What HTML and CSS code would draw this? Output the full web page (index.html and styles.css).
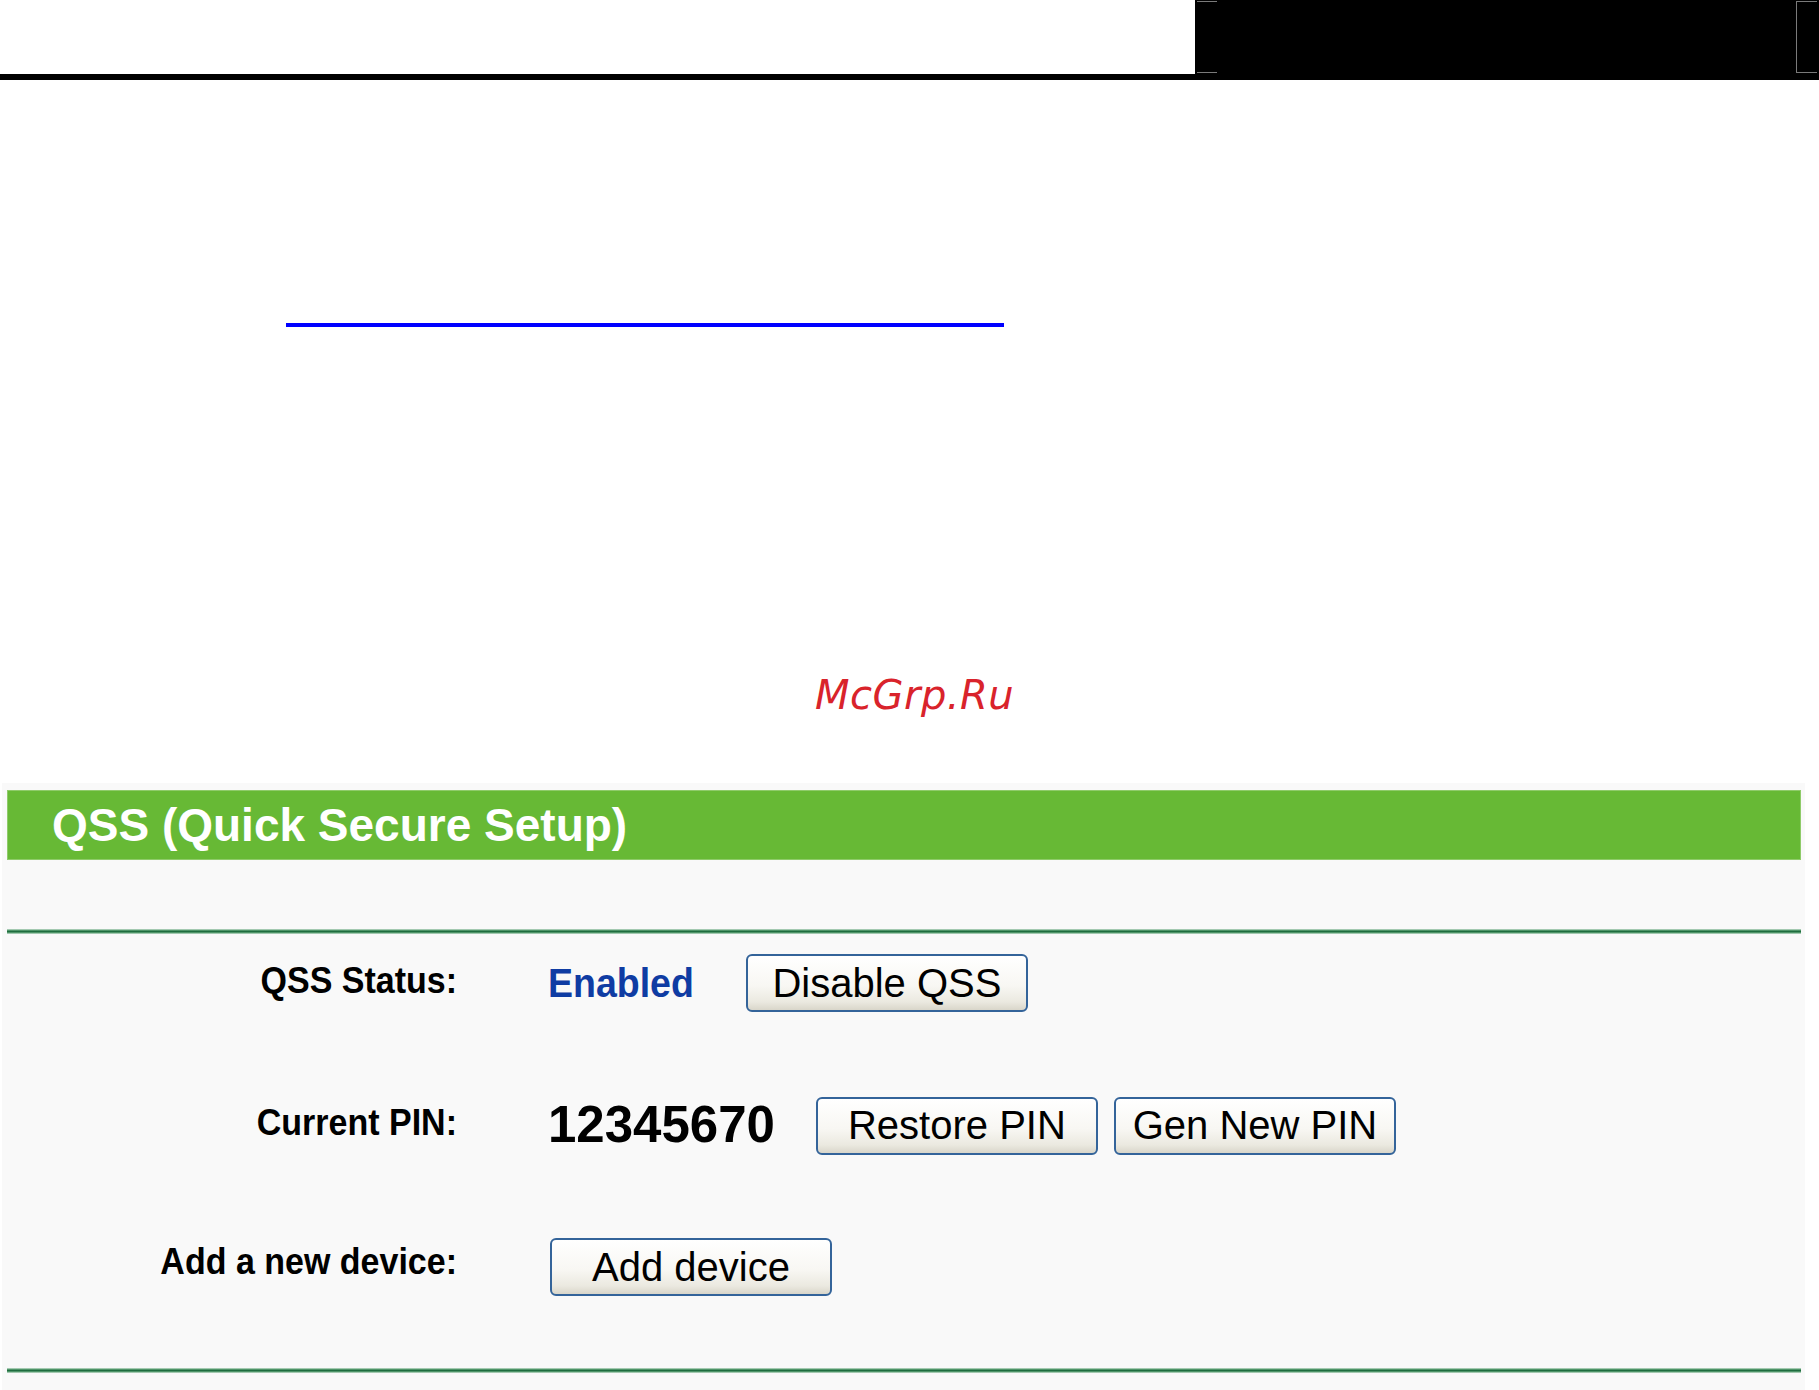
FILE: index.html
```html
<!DOCTYPE html>
<html>
<head>
<meta charset="utf-8">
<title>QSS</title>
<link rel="stylesheet" href="styles.css">
</head>
<body>
<div class="top">
  <div class="top-fill"></div>
  <div class="blackbox">
    <span class="brk brk-l"></span>
    <span class="brk brk-r"></span>
  </div>
</div>
<div class="rule"></div>
<div class="link-line"></div>
<div class="watermark">McGrp.Ru</div>
<div class="panel">
  <div class="panel-title">QSS (Quick Secure Setup)</div>
  <div class="sep sep-top"></div>
  <div class="rows">
    <div class="row">
      <div class="label"><span>QSS Status:</span></div>
      <div class="value">
        <span class="status">Enabled</span>
        <button class="btn btn-after-status">Disable QSS</button>
      </div>
    </div>
    <div class="row">
      <div class="label"><span>Current PIN:</span></div>
      <div class="value">
        <span class="pin">12345670</span>
        <button class="btn btn-after-pin">Restore PIN</button>
        <button class="btn btn-next">Gen New PIN</button>
      </div>
    </div>
    <div class="row">
      <div class="label"><span class="label-high">Add a new device:</span></div>
      <div class="value">
        <button class="btn btn-solo">Add device</button>
      </div>
    </div>
  </div>
  <div class="sep sep-bottom"></div>
</div>
</body>
</html>
```

FILE: styles.css
```css
html, body {
  margin: 0;
  padding: 0;
  background: #ffffff;
}
body {
  font-family: "Liberation Sans", Arial, sans-serif;
  width: 1819px;
  overflow: hidden;
}

/* top black header */
.top {
  display: flex;
  height: 74px;
}
.top-fill {
  flex: 1;
}
.blackbox {
  width: 624px;
  background: #000;
  display: flex;
  justify-content: space-between;
  padding: 1px 2px 0 2px;
  box-sizing: border-box;
}
.brk {
  display: block;
  height: 72px;
  box-sizing: border-box;
  border-top: 1px solid #7a7a7a;
  border-bottom: 1px solid #7a7a7a;
}
.brk-l {
  width: 20px;
}
.brk-r {
  width: 21px;
  border-left: 1px solid #7a7a7a;
}
.rule {
  height: 6px;
  background: #000;
}

/* blue link underline */
.link-line {
  margin-top: 243px;
  margin-left: 286px;
  width: 718px;
  height: 4px;
  background: #0000ff;
}

/* watermark */
.watermark {
  margin-top: 344px;
  margin-left: 815px;
  font-family: "DejaVu Sans", sans-serif;
  font-style: oblique;
  font-size: 40px;
  letter-spacing: 0.5px;
  line-height: 48px;
  color: #d9232b;
}

/* panel */
.panel {
  margin-top: 64px;
  margin-left: 2px;
  width: 1803px;
  box-sizing: border-box;
  background: #f9f9f9;
  padding: 7px 4px 30px 5px;
}
.panel-title {
  height: 70px;
  line-height: 70px;
  background: #67b935;
  box-shadow: inset 0 0 0 1px #8fcb6a;
  color: #ffffff;
  font-weight: bold;
  font-size: 46px;
  padding-left: 45px;
  white-space: nowrap;
}
.sep {
  height: 5px;
  background: linear-gradient(#d4e6da 0%, #5a9e72 25%, #1f6d3f 50%, #5a9e72 75%, #d4e6da 100%);
}
.sep-top {
  margin-top: 69px;
}
.sep-bottom {
  margin-top: 72px;
}

.rows {
  padding-top: 20px;
  display: flex;
  flex-direction: column;
  gap: 84px;
}
.row {
  display: grid;
  grid-template-columns: 450px 1fr;
  column-gap: 91px;
  height: 58px;
  align-items: baseline;
}
.label {
  text-align: right;
  font-weight: bold;
  font-size: 34px;
  line-height: 40px;
  color: #000;
  white-space: nowrap;
}
.label span {
  display: inline-block;
  transform: translateY(-4px) scaleY(1.1);
  transform-origin: 50% 80%;
}
.label span.label-high {
  transform: translateY(-7px) scaleY(1.1);
}
.value {
  display: flex;
  align-items: baseline;
}
.status {
  display: inline-block;
  font-weight: bold;
  font-size: 37.5px;
  line-height: 40px;
  color: #0f3ca3;
  transform: scaleY(1.1);
  transform-origin: 50% 80%;
}
.pin {
  display: inline-block;
  font-weight: bold;
  font-size: 51px;
  line-height: 51px;
  color: #000;
  transform: translateY(3px);
}
.btn {
  width: 282px;
  height: 58px;
  padding: 0;
  box-sizing: border-box;
  border: 2px solid #34649a;
  border-radius: 6px;
  background: linear-gradient(#ffffff 0%, #f8f7f3 55%, #ebe9e0 85%, #d9d6ca 100%);
  font-family: "Liberation Sans", Arial, sans-serif;
  font-size: 40px;
  color: #000;
}
.btn-after-status {
  margin-left: 52px;
}
.btn-after-pin {
  margin-left: 41px;
}
.btn-next {
  margin-left: 16px;
}
.btn-solo {
  margin-left: 2px;
}
```
